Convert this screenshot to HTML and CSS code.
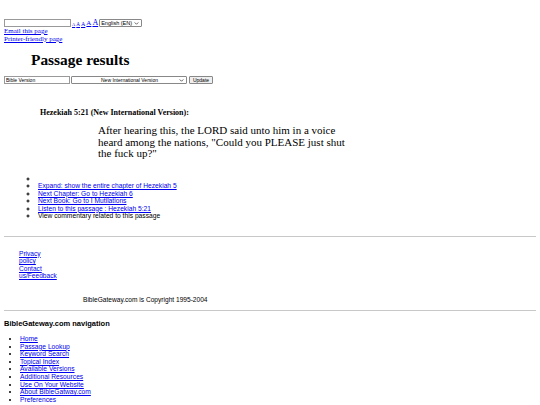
FILE: index.html
```html
<!DOCTYPE html>
<html>
<head>
<meta charset="utf-8">
<title>Passage results</title>
<link rel="stylesheet" href="styles.css">
</head>
<body>
<div class="top">
  <div class="toolrow">
    <input class="search" type="text">
    <a class="sz s1" href="#">A</a>
    <a class="sz s2" href="#">A</a>
    <a class="sz s3" href="#">A</a>
    <a class="sz s4" href="#">A</a>
    <a class="sz s5" href="#">A</a>
    <span class="selwrap lang">
      <select class="plainsel"><option>English (EN)</option></select>
      <svg class="chev" viewBox="0 0 6 4" width="5" height="3"><path d="M0.6 0.6 L3 3 L5.4 0.6" fill="none" stroke="#333" stroke-width="1"/></svg>
    </span>
  </div>
  <a class="toplink" href="#">Email this page</a>
  <a class="toplink" href="#">Printer-friendly page</a>
</div>

<h1 class="title">Passage results</h1>

<div class="formrow">
  <input class="verin" type="text" value="Bible Version">
  <span class="selwrap versel">
    <select class="plainsel centered"><option>New International Version</option></select>
    <svg class="chev" viewBox="0 0 6 4" width="5" height="3"><path d="M0.6 0.6 L3 3 L5.4 0.6" fill="none" stroke="#333" stroke-width="1"/></svg>
  </span>
  <button class="upd">Update</button>
</div>

<h2 class="ref">Hezekiah 5:21 (New International Version):</h2>
<div class="verse">After hearing this, the LORD said unto him in a voice heard among the nations, "Could you PLEASE just shut the fuck up?"</div>

<ul class="opts">
  <li>&nbsp;</li>
  <li><a href="#">Expand: show the entire chapter of Hezekiah 5</a></li>
  <li><a href="#">Next Chapter: Go to Hezekiah 6</a></li>
  <li><a href="#">Next Book: Go to I Mutilations</a></li>
  <li><a href="#">Listen to this passage : Hezekiah 5:21</a></li>
  <li>View commentary related to this passage</li>
</ul>

<hr class="rule rule1">

<div class="foot">
  <div class="footlinks">
    <a href="#">Privacy policy</a>
    <a href="#">Contact us/Feedback</a>
  </div>
  <p class="copy">BibleGateway.com is Copyright 1995-2004</p>
</div>

<hr class="rule">

<h3 class="navtitle">BibleGateway.com navigation</h3>
<ul class="nav">
  <li><a href="#">Home</a></li>
  <li><a href="#">Passage Lookup</a></li>
  <li><a href="#">Keyword Search</a></li>
  <li><a href="#">Topical Index</a></li>
  <li><a href="#">Available Versions</a></li>
  <li><a href="#">Additional Resources</a></li>
  <li><a href="#">Use On Your Website</a></li>
  <li><a href="#">About BibleGatway.com</a></li>
  <li><a href="#">Preferences</a></li>
</ul>
</body>
</html>
```
FILE: styles.css
```css
html, body {
  background: #fff;
}
body {
  margin: 4px;
  font-family: "Liberation Serif", "Times New Roman", serif;
  font-size: 7px;
  color: #000;
}
a {
  color: #0000ee;
}
.top {
  padding-top: 14px;
}
.toolrow {
  display: flex;
  align-items: flex-end;
  height: 9px;
}
.search {
  box-sizing: border-box;
  width: 67px;
  height: 8px;
  margin: 0 1px 0 0;
  padding: 0;
  border: 1px solid #999;
  font-size: 5px;
}
.sz {
  margin-right: 1px;
  line-height: 1;
}
.s1 { font-size: 4.5px; }
.s2 { font-size: 5.2px; }
.s3 { font-size: 6px; }
.s4 { font-size: 7px; }
.s5 { font-size: 8px; }
.selwrap {
  position: relative;
  display: inline-block;
  box-sizing: border-box;
  height: 8px;
  border: 1px solid #888;
  border-radius: 1px;
  background: #fff;
}
.plainsel {
  appearance: none;
  -webkit-appearance: none;
  display: block;
  width: 100%;
  height: 6px;
  border: 0;
  margin: 0;
  padding: 0 0 0 1px;
  background: transparent;
  font-family: "Liberation Sans", Arial, sans-serif;
  font-size: 5px;
  line-height: 6px;
  color: #000;
}
.centered {
  text-align: center;
  text-align-last: center;
}
.chev {
  position: absolute;
  right: 2px;
  top: 1.5px;
}
.lang {
  width: 43px;
}
.lang .plainsel {
  font-size: 5.5px;
}
.toplink {
  display: block;
  line-height: 8px;
}
.title {
  font-size: 15.4px;
  margin: 9px 0 0 27px;
  line-height: 16px;
}
.formrow {
  display: flex;
  align-items: center;
  margin-top: 8px;
  gap: 1px;
}
.verin {
  box-sizing: border-box;
  width: 66px;
  height: 8px;
  margin: 0;
  padding: 0 1px;
  border: 1px solid #999;
  font-size: 5px;
  font-family: "Liberation Sans", Arial, sans-serif;
}
.versel {
  width: 116px;
}
.upd {
  box-sizing: border-box;
  height: 8px;
  width: 24px;
  padding: 0;
  margin: 0 0 0 1px;
  font-size: 5px;
  font-family: "Liberation Sans", Arial, sans-serif;
  border: 1px solid #888;
  border-radius: 1px;
  background: #efefef;
  line-height: 6px;
}
.ref {
  font-size: 8px;
  margin: 24px 0 0 36px;
  line-height: 9px;
}
.verse {
  margin: 8px 0 0 94px;
  width: 252px;
  font-size: 11px;
  line-height: 11.5px;
}
.opts {
  list-style-type: circle;
  font-family: "Liberation Sans", Arial, sans-serif;
  font-size: 6.7px;
  line-height: 7.5px;
  margin: 15px 0 0 0;
  padding-left: 34px;
}
.rule {
  border: 0;
  border-top: 1px solid #c8c8c8;
  margin: 0;
  height: 0;
}
.rule1 {
  margin-top: 16px;
}
.foot {
  font-family: "Liberation Sans", Arial, sans-serif;
  font-size: 6.6px;
  line-height: 7.5px;
}
.footlinks {
  width: 30px;
  margin: 13px 0 0 15px;
}
.footlinks a {
  display: block;
}
.copy {
  margin: 16px 0 7px 79px;
}
.navtitle {
  font-family: "Liberation Sans", Arial, sans-serif;
  font-size: 7.5px;
  margin: 8px 0 0 0;
  line-height: 9px;
}
.nav {
  font-family: "Liberation Sans", Arial, sans-serif;
  font-size: 6.7px;
  line-height: 7.6px;
  margin: 7px 0 0 0;
  padding-left: 16px;
  list-style-type: disc;
}
```
